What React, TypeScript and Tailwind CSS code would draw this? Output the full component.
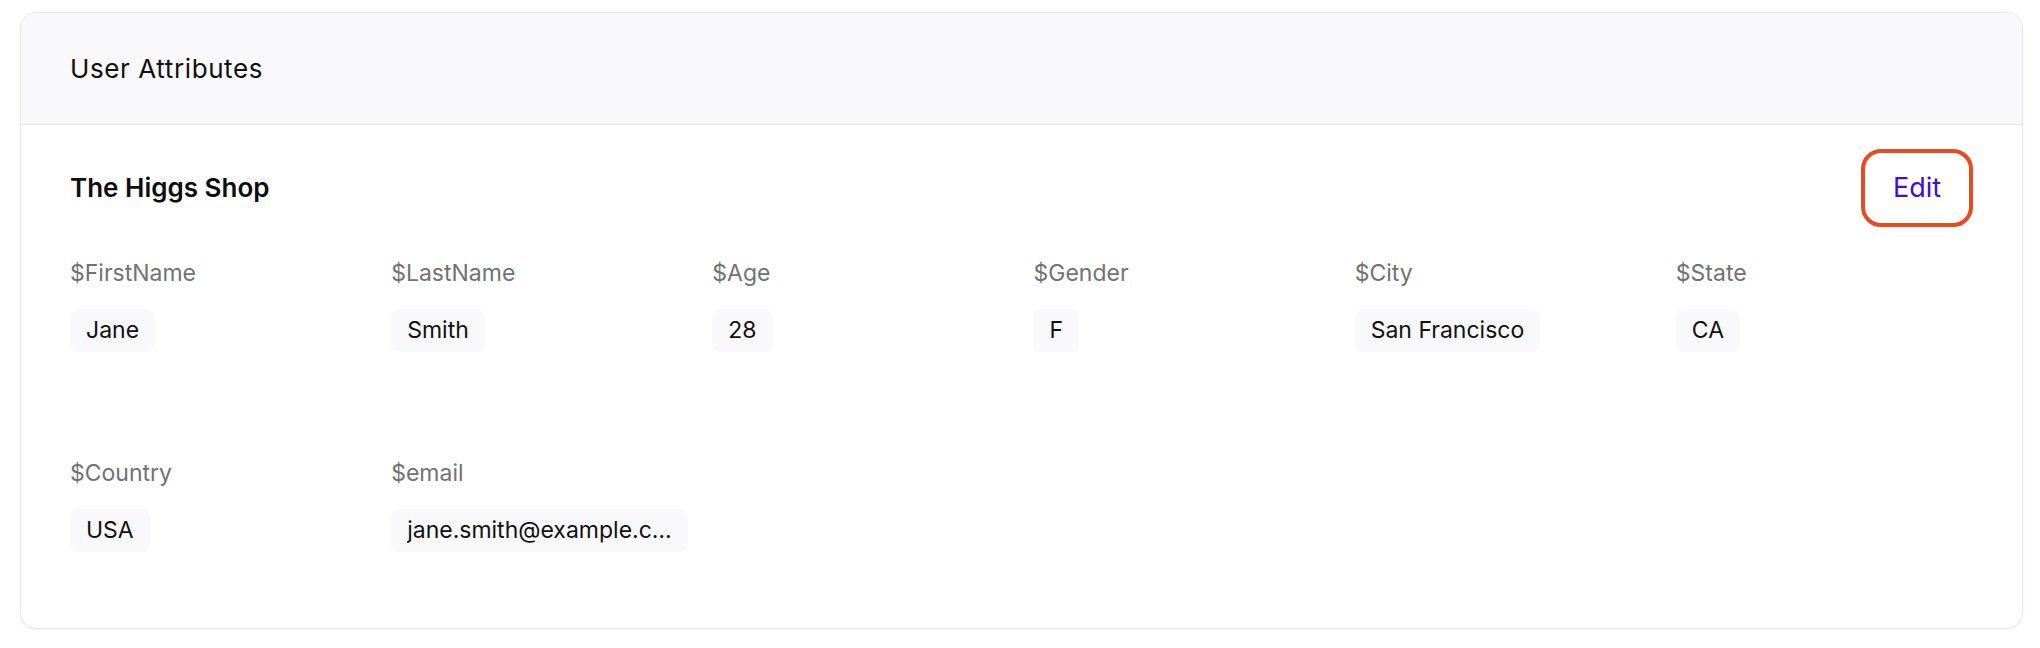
import React from "react";

const attrs: { label: string; value: string; full?: boolean }[] = [
  { label: "$FirstName", value: "Jane" },
  { label: "$LastName", value: "Smith" },
  { label: "$Age", value: "28" },
  { label: "$Gender", value: "F" },
  { label: "$City", value: "San Francisco" },
  { label: "$State", value: "CA" },
  { label: "$Country", value: "USA" },
  { label: "$email", value: "jane.smith@example.com", full: true },
];

export default function App() {
  return (
    <div className="w-[2040px] h-[648px] bg-white pt-[12px] pl-[20px] font-['Inter','Liberation_Sans',sans-serif]">
      <div className="w-[2003px] rounded-2xl border border-[#e6e6e8] bg-white overflow-hidden shadow-[0_1px_3px_rgba(0,0,0,0.04)]">
        <div className="h-[112px] bg-[#f9f9fb] border-b border-[#e8e8ea] flex items-center px-[49px]">
          <h2 className="text-[26px] leading-8 tracking-[0.6px] text-[#111111]">User Attributes</h2>
        </div>
        <div className="px-[49px] pt-6 pb-[76px]">
          <div className="flex items-center justify-between h-[78px]">
            <h3 className="text-[26px] leading-8 font-semibold text-[#0d0d0d]">The Higgs Shop</h3>
            <button className="h-[78px] w-[112px] rounded-[20px] border-4 border-[#ea4a22] text-[27px] text-[#3d0fd8] flex items-center justify-center">
              Edit
            </button>
          </div>
          <div className="mt-[30px] grid grid-cols-6 gap-x-6 gap-y-[105px]">
            {attrs.map((a) => (
              <div key={a.label} className="flex flex-col gap-5 min-w-0">
                <div className="text-[23px] leading-8 text-[#727272]">{a.label}</div>
                <div
                  className={
                    "h-[43px] rounded-lg bg-[#f9f9fb] px-4 flex items-center text-[23px] text-[#111111] min-w-0 " +
                    (a.full ? "w-full" : "w-fit max-w-full")
                  }
                >
                  <span className="truncate">{a.value}</span>
                </div>
              </div>
            ))}
          </div>
        </div>
      </div>
    </div>
  );
}
